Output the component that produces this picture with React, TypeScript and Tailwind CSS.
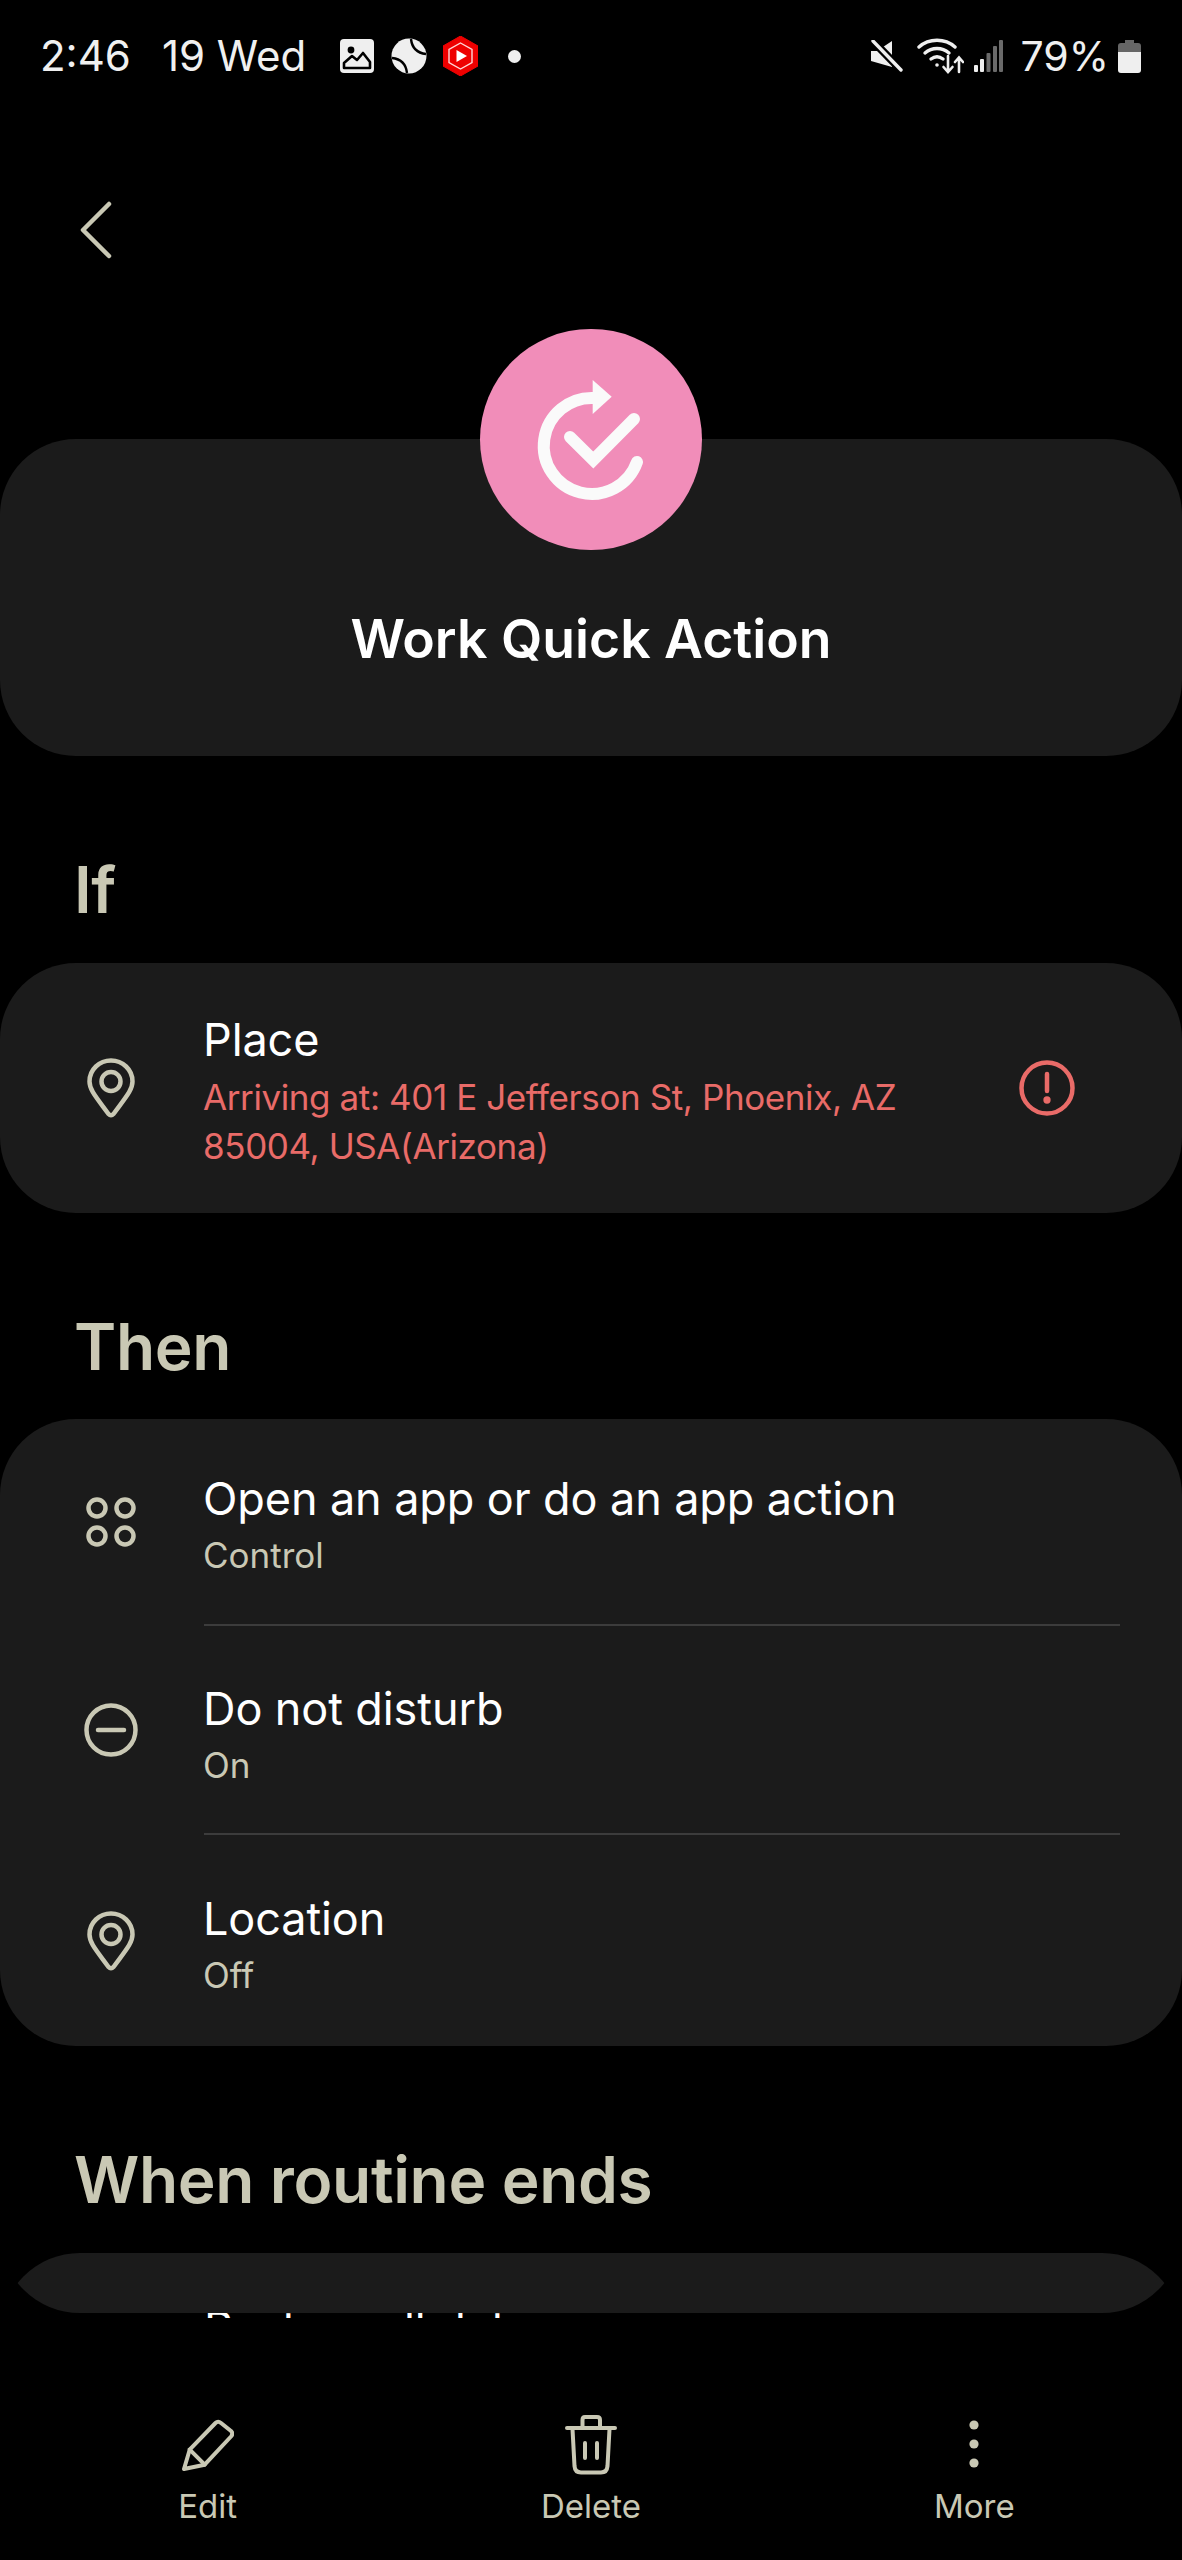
const INK = "#c9c8b4";

function Pin() {
  return (
    <svg width="48" height="60" viewBox="0 0 48 60" fill="none" stroke={INK} strokeWidth="4.5" strokeLinejoin="round">
      <path d="M24 2.5C12.4 2.5 2.5 11.5 2.5 23.5C2.5 32 9 39 21.5 56Q24 58.5 26.5 56C39 39 45.5 32 45.5 23.5C45.5 11.5 35.6 2.5 24 2.5Z" />
      <circle cx="24" cy="23.5" r="9.5" />
    </svg>
  );
}

function Apps() {
  return (
    <svg width="50" height="50" viewBox="0 0 50 50" fill="none" stroke={INK} strokeWidth="4.5">
      <circle cx="11" cy="11" r="8.5" />
      <circle cx="39" cy="11" r="8.5" />
      <circle cx="11" cy="39" r="8.5" />
      <circle cx="39" cy="39" r="8.5" />
    </svg>
  );
}

function Dnd() {
  return (
    <svg width="54" height="54" viewBox="0 0 54 54" fill="none" stroke={INK} strokeWidth="4.5" strokeLinecap="round">
      <circle cx="27" cy="27" r="24.5" />
      <path d="M14 27H40" />
    </svg>
  );
}

function Alert() {
  return (
    <svg width="56" height="56" viewBox="0 0 56 56" fill="none" stroke="#e96b68" strokeWidth="4.5" strokeLinecap="round">
      <circle cx="28" cy="28" r="25.5" />
      <path d="M28 14V31" />
      <circle cx="28" cy="40" r="1.4" fill="#e96b68" />
    </svg>
  );
}

function Logo() {
  return (
    <svg width="222" height="222" viewBox="0 0 222 222" fill="none">
      <path d="M114 69A48 48 0 1 0 157 133" stroke="#fafafa" strokeWidth="12" strokeLinecap="round" />
      <path d="M112.7 51L131.7 67.7L112.7 85Z" fill="#fafafa" />
      <path d="M90 108L113.3 131L154 90" stroke="#fafafa" strokeWidth="12" strokeLinecap="round" strokeLinejoin="miter" />
    </svg>
  );
}

function Pencil() {
  return (
    <svg width="52" height="52" viewBox="0 0 52 52" fill="none" stroke={INK} strokeWidth="4" strokeLinecap="round" strokeLinejoin="round">
      <path d="M2 50L7.7 30.7L33.5 4Q36 1.5 39 4L49 12Q51.5 14.5 49 17.5L22.7 45.7Z" />
      <path d="M7.7 30.7L22.7 45.7" />
    </svg>
  );
}

function Trash() {
  return (
    <svg width="52" height="60" viewBox="0 0 52 60" fill="none" stroke={INK} strokeWidth="4" strokeLinecap="round" strokeLinejoin="round">
      <path d="M17.5 12V5Q17.5 2 20 2H32Q35 2 35 5V12" />
      <path d="M2 13H50" />
      <path d="M7.5 14L9.5 51Q10 57.5 16 57.5H36Q42 57.5 42.5 51L44.5 14" />
      <path d="M20 28V43M32 28V43" />
    </svg>
  );
}

function Dots() {
  return (
    <svg width="12" height="60" viewBox="0 0 12 60" fill={INK}>
      <circle cx="6" cy="10" r="4.6" />
      <circle cx="6" cy="29" r="4.6" />
      <circle cx="6" cy="48" r="4.6" />
    </svg>
  );
}

function Row({ icon, title, sub, rowClass, textPad }: { icon: React.ReactNode; title: string; sub: string; rowClass: string; textPad: string }) {
  return (
    <div className={`flex ${rowClass}`}>
      <div className="w-[222px] flex items-center justify-center shrink-0">{icon}</div>
      <div className={`-ml-[19px] ${textPad}`}>
        <div className="text-[45px] leading-[56px] tracking-[-0.1px] text-white">{title}</div>
        <div className="text-[35px] leading-[56px] text-[#c9c8b4]">{sub}</div>
      </div>
    </div>
  );
}

function Heading({ children, className }: { children: React.ReactNode; className: string }) {
  return (
    <h2 className={`pl-[74px] text-[64px] leading-[70px] font-semibold tracking-[-0.35px] text-[#c9c8b4] ${className}`}>{children}</h2>
  );
}

export default function App() {
  return (
    <div
      className="w-[1182px] h-[2560px] bg-black flex flex-col overflow-hidden"
      style={{ fontFamily: "Inter, 'Liberation Sans', sans-serif" }}
    >
      {/* status bar */}
      <div className="h-[112px] shrink-0 flex items-center justify-between pl-[40px] pr-[41px] text-[#f0f0f0] text-[41px] leading-none">
        <div className="flex items-center text-[42px]">
          <span>2:46</span>
          <span className="ml-[31px]">19 Wed</span>
          <svg className="ml-[34px]" width="34" height="34" viewBox="0 0 34 34">
            <rect width="34" height="34" rx="4" fill="#efefef" />
            <circle cx="11" cy="11" r="3.4" fill="#000" />
            <path d="M4 29V24L12 17L17 21L23 14L30 23V29Z" fill="none" stroke="#000" strokeWidth="2.6" strokeLinejoin="round" />
          </svg>
          <svg className="ml-[17px]" width="36" height="36" viewBox="0 0 36 36">
            <circle cx="18" cy="18" r="17.5" fill="#efefef" />
            <path d="M20 1C21 10 26 15 35 16M1 20C10 21 15 26 16 35" fill="none" stroke="#000" strokeWidth="2.4" />
          </svg>
          <svg className="ml-[16px]" width="35" height="40" viewBox="0 0 35 40">
            <path d="M17.5 0L35 10V30L17.5 40L0 30V10Z" fill="#ee0000" stroke="#ee0000" strokeLinejoin="round" />
            <path d="M17.5 7L29 13.5V26.5L17.5 33L6 26.5V13.5Z" fill="none" stroke="#ffd6d6" strokeWidth="1.4" />
            <path d="M13.5 14L24 20L13.5 26Z" fill="#fff" />
          </svg>
          <span className="ml-[30px] w-[13px] h-[13px] rounded-full bg-[#efefef]" />
        </div>
        <div className="flex items-center">
          <svg width="33" height="32" viewBox="0 0 33 32">
            <path d="M1 11H7L22 1V27L1 21Z" fill="#efefef" />
            <path d="M2 0L32 31" stroke="#000" strokeWidth="8" />
            <path d="M3 1L31 30" stroke="#efefef" strokeWidth="3.4" strokeLinecap="round" />
          </svg>
          <svg className="ml-[14px]" width="47" height="36" viewBox="0 0 47 36" fill="none" stroke="#efefef" strokeWidth="3.4" strokeLinecap="round">
            <path d="M2 9C12 0 28 0 38 9" />
            <path d="M8 15C15 9 25 9 32 15" />
            <path d="M14 21C18 18 22 18 26 21" />
            <circle cx="20" cy="27" r="1.8" fill="#efefef" stroke="none" />
            <path d="M31 18V33M26.5 29L31 34L35.500 29" strokeWidth="2.6" />
            <path d="M42 34V20M38 24L42 19.500L46 24" strokeWidth="2.6" />
          </svg>
          <svg className="ml-[10px]" width="29" height="32" viewBox="0 0 29 32">
            <rect x="0" y="25" width="4" height="7" rx="1" fill="#efefef" />
            <rect x="6" y="19" width="4" height="13" rx="1" fill="#efefef" />
            <rect x="12.500" y="13" width="4" height="19" rx="1" fill="#6a6a6a" />
            <rect x="19" y="6" width="4" height="26" rx="1" fill="#6a6a6a" />
            <rect x="25" y="0" width="4" height="32" rx="1" fill="#6a6a6a" />
          </svg>
          <span className="ml-[18px]">79%</span>
          <svg className="ml-[9px]" width="23" height="33" viewBox="0 0 23 33">
            <path d="M7 0H16V3H20Q23 3 23 6V12H0V6Q0 3 3 3H7Z" fill="#666" />
            <path d="M0 12H23V30Q23 33 20 33H3Q0 33 0 30Z" fill="#efefef" />
          </svg>
        </div>
      </div>

      {/* scrolling region, clipped at the bottom */}
      <main className="h-[2201px] shrink-0 overflow-hidden rounded-b-[80px]">
        <div className="h-[217px] pl-[80px] pt-[89px]">
          <svg width="32" height="58" viewBox="0 0 32 58" fill="none" stroke={INK} strokeWidth="4.500" strokeLinecap="round" strokeLinejoin="round">
            <path d="M29 3L3 29L29 55" />
          </svg>
        </div>
        <div className="relative z-10 mx-auto -mb-[111px] h-[221px] w-[222px] rounded-full bg-[#f18db9]">
          <Logo />
        </div>
        <section className="h-[317px] rounded-[76px] bg-[#1b1b1b] pt-[170px] text-center">
          <h1 className="text-[53.5px] leading-[60px] font-semibold text-white">Work Quick Action</h1>
        </section>

        <Heading className="mt-[99px]">If</Heading>
        <section className="mt-[38px] h-[250px] rounded-[76px] bg-[#1b1b1b] flex">
          <div className="w-[222px] shrink-0 flex items-center justify-center">
            <Pin />
          </div>
          <div className="-ml-[19px] w-[760px] pt-[49px]">
            <div className="text-[45px] leading-[56px] tracking-[-0.1px] text-white">Place</div>
            <div className="mt-[5px] text-[35px] leading-[49px] tracking-[-0.4px] text-[#e96b68]">
              Arriving at: 401 E Jefferson St, Phoenix, AZ 85004, USA(Arizona)
            </div>
          </div>
          <div className="ml-[56px] flex items-center">
            <Alert />
          </div>
        </section>

        <Heading className="mt-[99px]">Then</Heading>
        <section className="mt-[37px] h-[627px] rounded-[76px] bg-[#1b1b1b] flex flex-col">
          <Row icon={<Apps />} title="Open an app or do an app action" sub="Control" rowClass="h-[205px]" textPad="pt-[52px]" />
          <div className="ml-[204px] mr-[62px] h-[2px] bg-[#3c3c3c]" />
          <Row icon={<Dnd />} title="Do not disturb" sub="On" rowClass="h-[207px]" textPad="pt-[55px]" />
          <div className="ml-[204px] mr-[62px] h-[2px] bg-[#3c3c3c]" />
          <Row icon={<Pin />} title="Location" sub="Off" rowClass="flex-1" textPad="pt-[56px]" />
        </section>

        <Heading className="mt-[99px]">When routine ends</Heading>
        <section className="mt-[38px] h-[300px] rounded-t-[80px] bg-[#1b1b1b]" />
      </main>

      {/* sliver of the next row's text that shows below the clip */}
      <div className="h-[5px] shrink-0 overflow-hidden pl-[204px]">
        <div className="-mt-[13px] text-[45px] leading-[56px] text-white whitespace-nowrap">Restore all data</div>
      </div>

      {/* bottom bar */}
      <nav className="mt-[97px] px-[16px] grid grid-cols-3 text-[33px] leading-[40px] text-[#c9c8b4]">
        <div className="flex flex-col items-center">
          <div className="h-[60px] flex items-center"><Pencil /></div>
          <span className="mt-[11px]">Edit</span>
        </div>
        <div className="flex flex-col items-center">
          <div className="h-[60px] flex items-center"><Trash /></div>
          <span className="mt-[11px]">Delete</span>
        </div>
        <div className="flex flex-col items-center">
          <div className="h-[60px] flex items-center"><Dots /></div>
          <span className="mt-[11px]">More</span>
        </div>
      </nav>
    </div>
  );
}
